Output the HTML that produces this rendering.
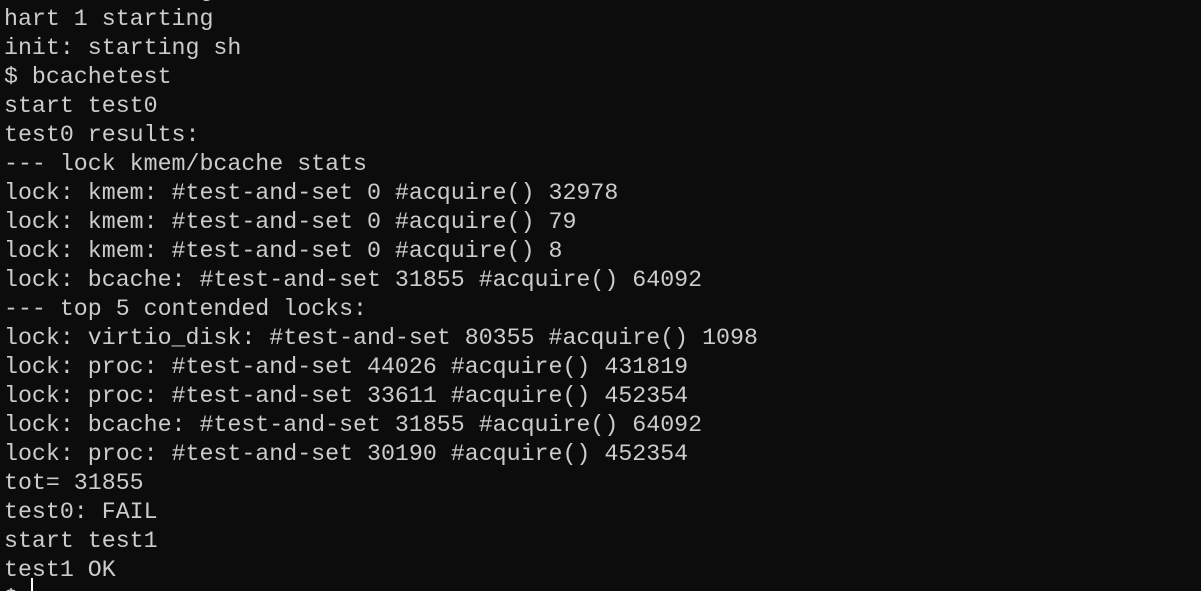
<!DOCTYPE html>
<html><head><meta charset="utf-8"><style>
html,body{margin:0;padding:0;background:#0c0c0c;width:1201px;height:591px;overflow:hidden}
#w{position:fixed;left:0;top:0;width:1201px;height:591px;overflow:hidden;background:#0c0c0c}
pre{position:absolute;left:4px;top:-24px;margin:0;font-family:"Liberation Mono",monospace;font-size:23.27px;line-height:29px;color:#cccccc;white-space:pre}
.cur{position:absolute;left:31px;top:578px;width:2px;height:20px;background:#ffffff}
</style></head><body><div id="w">
<pre>hart 2 starting
hart 1 starting
init: starting sh
$ bcachetest
start test0
test0 results:
--- lock kmem/bcache stats
lock: kmem: #test-and-set 0 #acquire() 32978
lock: kmem: #test-and-set 0 #acquire() 79
lock: kmem: #test-and-set 0 #acquire() 8
lock: bcache: #test-and-set 31855 #acquire() 64092
--- top 5 contended locks:
lock: virtio_disk: #test-and-set 80355 #acquire() 1098
lock: proc: #test-and-set 44026 #acquire() 431819
lock: proc: #test-and-set 33611 #acquire() 452354
lock: bcache: #test-and-set 31855 #acquire() 64092
lock: proc: #test-and-set 30190 #acquire() 452354
tot= 31855
test0: FAIL
start test1
test1 OK
$ </pre>
<div class="cur"></div>
</div></body></html>
